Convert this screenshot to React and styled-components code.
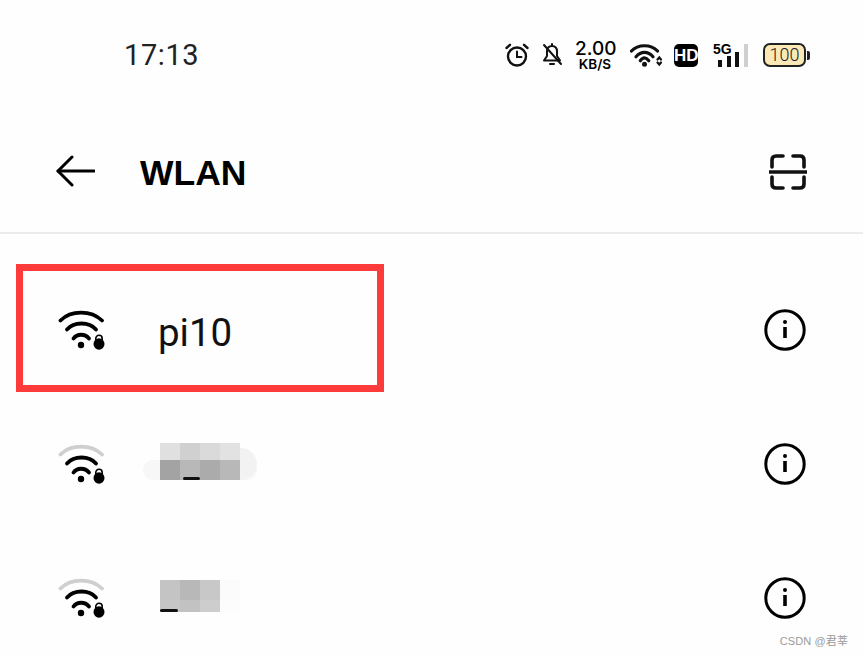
import React from 'react';
import styled, { createGlobalStyle } from 'styled-components';

const Global = createGlobalStyle`
  html, body {
    margin: 0;
    background: #fff;
    font-family: Roboto, "Liberation Sans", sans-serif;
  }
`;

const Screen = styled.div`
  position: relative;
  width: 863px;
  height: 656px;
  overflow: hidden;
  background: #fefefe;
  color: #000;
`;

const StatusBar = styled.div`
  display: flex;
  align-items: center;
  justify-content: space-between;
  height: 110px;
  padding: 0 53px 0 124px;
  box-sizing: border-box;
`;

const Time = styled.div`
  font-size: 29px;
  letter-spacing: 0.6px;
  color: #222;
`;

const StatusIcons = styled.div`
  display: flex;
  align-items: center;
  gap: 12px;
  height: 26px;
`;

const Icon = styled.svg`
  display: block;
  flex: none;
  margin-left: ${(p) => p.$shift || 0}px;
  margin-top: ${(p) => p.$drop || 0}px;
`;

const Speed = styled.div`
  width: 40px;
  text-align: center;
  font-family: Inter, "Liberation Sans", sans-serif;
  .value {
    display: block;
    font-size: 19px;
    font-weight: 500;
    line-height: 15px;
  }
  .unit {
    display: block;
    font-size: 13.5px;
    font-weight: 600;
    line-height: 12px;
    margin-top: 2px;
  }
`;

const HdBadge = styled.div`
  width: 24px;
  height: 23px;
  border-radius: 5px;
  background: #000;
  color: #fff;
  font: 700 17px/23px "Liberation Sans Narrow", "Liberation Sans", sans-serif;
  text-align: center;
`;

const Signal = styled.div`
  position: relative;
  width: 35px;
  height: 24px;
  margin-left: 3px;
  span {
    position: absolute;
    left: 0;
    top: 0;
    font: 700 14px/13px "Liberation Sans Narrow", "Liberation Sans", sans-serif;
  }
  svg {
    display: block;
  }
`;

const Battery = styled.div`
  display: flex;
  align-items: center;
  margin-left: 3px;
`;

const BatteryBody = styled.div`
  width: 43px;
  height: 24px;
  box-sizing: border-box;
  border: 2px solid #222;
  border-radius: 7px;
  background: #fbe8b6;
  font-size: 18px;
  font-weight: 300;
  line-height: 20px;
  text-align: center;
  color: #222;
`;

const BatteryNub = styled.div`
  width: 3px;
  height: 9px;
  margin-left: 1px;
  border-radius: 0 2px 2px 0;
  background: #222;
`;

const Header = styled.div`
  display: flex;
  align-items: center;
  height: 124px;
  padding: 0 56px;
  box-sizing: border-box;
  border-bottom: 2px solid #ececec;
`;

const Title = styled.h1`
  flex: 1;
  margin: 4px 0 0 45px;
  font: 700 35.5px "Liberation Sans", sans-serif;
`;

const List = styled.div`
  padding-top: 29px;
`;

const Row = styled.div`
  position: relative;
  display: flex;
  align-items: center;
  height: 134px;
  padding: 0 57px 0 58px;
  box-sizing: border-box;
`;

const Name = styled.div`
  flex: 1;
  margin: 4px 0 0 52px;
  font-size: 38.5px;
  color: #111;
`;

const Highlight = styled.div`
  position: absolute;
  left: 16px;
  top: 1px;
  width: 368px;
  height: 128px;
  box-sizing: border-box;
  border: 7px solid #fe3b3b;
`;

const Blurred = styled.div`
  position: relative;
  flex: 1;
  height: 60px;
  margin-left: 54px;
`;

const Smear = styled.div`
  position: absolute;
  left: ${(p) => p.$left}px;
  top: ${(p) => p.$top}px;
  width: ${(p) => p.$width}px;
  height: ${(p) => p.$height}px;
  border-radius: ${(p) => p.$radius};
  background: ${(p) => p.$color};
`;

const Mosaic = styled.div`
  position: absolute;
  left: 0;
  top: ${(p) => p.$top}px;
  display: grid;
  grid-template-columns: repeat(4, 20px);
  grid-template-rows: ${(p) => p.$rows};
`;

const Cell = styled.div`
  background: ${(p) => p.$color};
`;

const Stroke = styled.div`
  position: absolute;
  left: ${(p) => p.$left}px;
  top: ${(p) => p.$top}px;
  width: ${(p) => p.$width}px;
  height: 3px;
  border-radius: 2px;
  background: #111;
`;

const Watermark = styled.div`
  position: absolute;
  right: 15px;
  bottom: 8px;
  font: 11px "Liberation Sans", "Noto Sans CJK SC", sans-serif;
  letter-spacing: 0.1px;
  color: #9a9a9a;
`;

function AlarmIcon() {
  return (
    <Icon width="24" height="24" viewBox="0 0 24 24" fill="none" stroke="#111" strokeWidth="2.4" strokeLinecap="round">
      <circle cx="12" cy="13.5" r="9" />
      <path d="M12 8.5v5.5h4.5" strokeWidth="2" />
      <path d="M1.5 5 5 1.8M22.5 5 19 1.8" />
    </Icon>
  );
}

function BellOffIcon() {
  return (
    <Icon width="22" height="24" viewBox="0 0 22 24" fill="none" stroke="#111" strokeWidth="2" strokeLinecap="round" strokeLinejoin="round">
      <path d="M6 8.5C6 5 8 3 11 3s5 2 5 5.500v4.500l3 4.500H3l3-4.500z" />
      <path d="M11 1v2M9 21h4" />
      <path d="M3 2 20 21" />
    </Icon>
  );
}

function StatusWifi() {
  return (
    <Icon $shift={3} width="32" height="23" viewBox="0 0 32 23" fill="none" stroke="#111" strokeWidth="3.2" strokeLinecap="round">
      <path d="M1.500 7C8 0 21 0 27.500 7" />
      <path d="M6 12.700C11 7 18 7 23 12.700" />
      <path d="M10.300 16.800C13 13 16 13 18.800 16.800" />
      <circle cx="14.500" cy="20.300" r="2.500" fill="#111" stroke="none" />
      <path d="M27.500 15.500 29.300 13.500 31 15.500M27.500 18.500 29.300 20.500 31 18.500" strokeWidth="2.200" />
    </Icon>
  );
}

function BackArrow() {
  return (
    <Icon width="39" height="32" viewBox="0 0 39 32" fill="none" stroke="#000" strokeWidth="3" strokeLinecap="round" strokeLinejoin="round">
      <path d="M38 16H2" />
      <path d="M16 2 2 16l14 14" />
    </Icon>
  );
}

function ScanIcon() {
  return (
    <Icon $drop={2} width="38" height="36" viewBox="0 0 38 36" fill="none" stroke="#111" strokeWidth="3.600" strokeLinecap="round">
      <path d="M3 13V6q0-4 4-4h7" />
      <path d="M24 2h7q4 0 4 4v7" />
      <path d="M3 23v7q0 4 4 4h7" />
      <path d="M24 34h7q4 0 4-4v-7" />
      <path d="M0 18h38" strokeLinecap="butt" />
    </Icon>
  );
}

function WifiLock({ weak }) {
  return (
    <Icon width="48" height="42" viewBox="0 0 48 42" fill="none" stroke="#000" strokeWidth="3.800" strokeLinecap="round">
      <path d="M2.500 11.500C13 1 33 1 44 11.500" stroke={weak ? '#cfcfcf' : '#000'} />
      <path d="M9 20.500C16 12.500 31 12.500 38 20.500" />
      <path d="M15.500 29.500C19 24.500 27 24.500 31 29.500" />
      <circle cx="23" cy="36" r="3.200" fill="#000" stroke="none" />
      <ellipse cx="41" cy="35" rx="5.500" ry="5.800" fill="#000" stroke="none" />
      <path d="M37.800 31v-1.500a3.200 3.200 0 0 1 6.400 0V31" strokeWidth="1.600" />
    </Icon>
  );
}

function InfoIcon() {
  return (
    <Icon width="42" height="42" viewBox="0 0 42 42" fill="none" stroke="#000" strokeWidth="3">
      <circle cx="21" cy="21" r="19.200" />
      <circle cx="21" cy="13" r="2" fill="#000" stroke="none" />
      <path d="M21 18v11" strokeWidth="3.600" />
    </Icon>
  );
}

const rowTwoCells = ['#e0e0e0', '#d0d0d0', '#dadada', '#e2e2e2', '#a3a3a3', '#b8b8b8', '#ababab', '#b8b8b8'];
const rowThreeCells = ['#c4c4c4', '#b8b8b8', '#c8c8c8', '#fbfbfb', '#c6c6c6', '#c2c2c2', '#cdcdcd', '#fcfcfc'];

export default function App() {
  return (
    <Screen>
      <Global />
      <StatusBar>
        <Time>17:13</Time>
        <StatusIcons>
          <AlarmIcon />
          <BellOffIcon />
          <Speed>
            <span className="value">2.00</span>
            <span className="unit">KB/S</span>
          </Speed>
          <StatusWifi />
          <HdBadge>HD</HdBadge>
          <Signal>
            <span>5G</span>
            <svg width="35" height="24" viewBox="0 0 35 24" fill="#111">
              <rect x="5" y="17" width="4" height="7" />
              <rect x="14" y="13" width="4" height="11" />
              <rect x="22" y="9" width="4" height="15" />
              <rect x="31" y="1" width="4" height="23" fill="#cfcfcf" />
            </svg>
          </Signal>
          <Battery>
            <BatteryBody>100</BatteryBody>
            <BatteryNub />
          </Battery>
        </StatusIcons>
      </StatusBar>

      <Header>
        <BackArrow />
        <Title>WLAN</Title>
        <ScanIcon />
      </Header>

      <List>
        <Row>
          <WifiLock />
          <Name>pi10</Name>
          <InfoIcon />
          <Highlight />
        </Row>
        <Row>
          <WifiLock weak />
          <Blurred>
            <Smear $left={-17} $top={26} $width={114} $height={20} $radius="10px" $color="#f7f7f7" />
            <Smear $left={80} $top={14} $width={17} $height={32} $radius="0 16px 16px 0" $color="#f2f2f2" />
            <Mosaic $top={9} $rows="17px 20px">
              {rowTwoCells.map((c, i) => (
                <Cell key={i} $color={c} />
              ))}
            </Mosaic>
            <Stroke $left={23} $top={43} $width={17} />
          </Blurred>
          <InfoIcon />
        </Row>
        <Row>
          <WifiLock weak />
          <Blurred>
            <Mosaic $top={12} $rows="20px 12px">
              {rowThreeCells.map((c, i) => (
                <Cell key={i} $color={c} />
              ))}
            </Mosaic>
            <Stroke $left={0} $top={41} $width={18} />
          </Blurred>
          <InfoIcon />
        </Row>
      </List>

      <Watermark>CSDN @君莘</Watermark>
    </Screen>
  );
}
